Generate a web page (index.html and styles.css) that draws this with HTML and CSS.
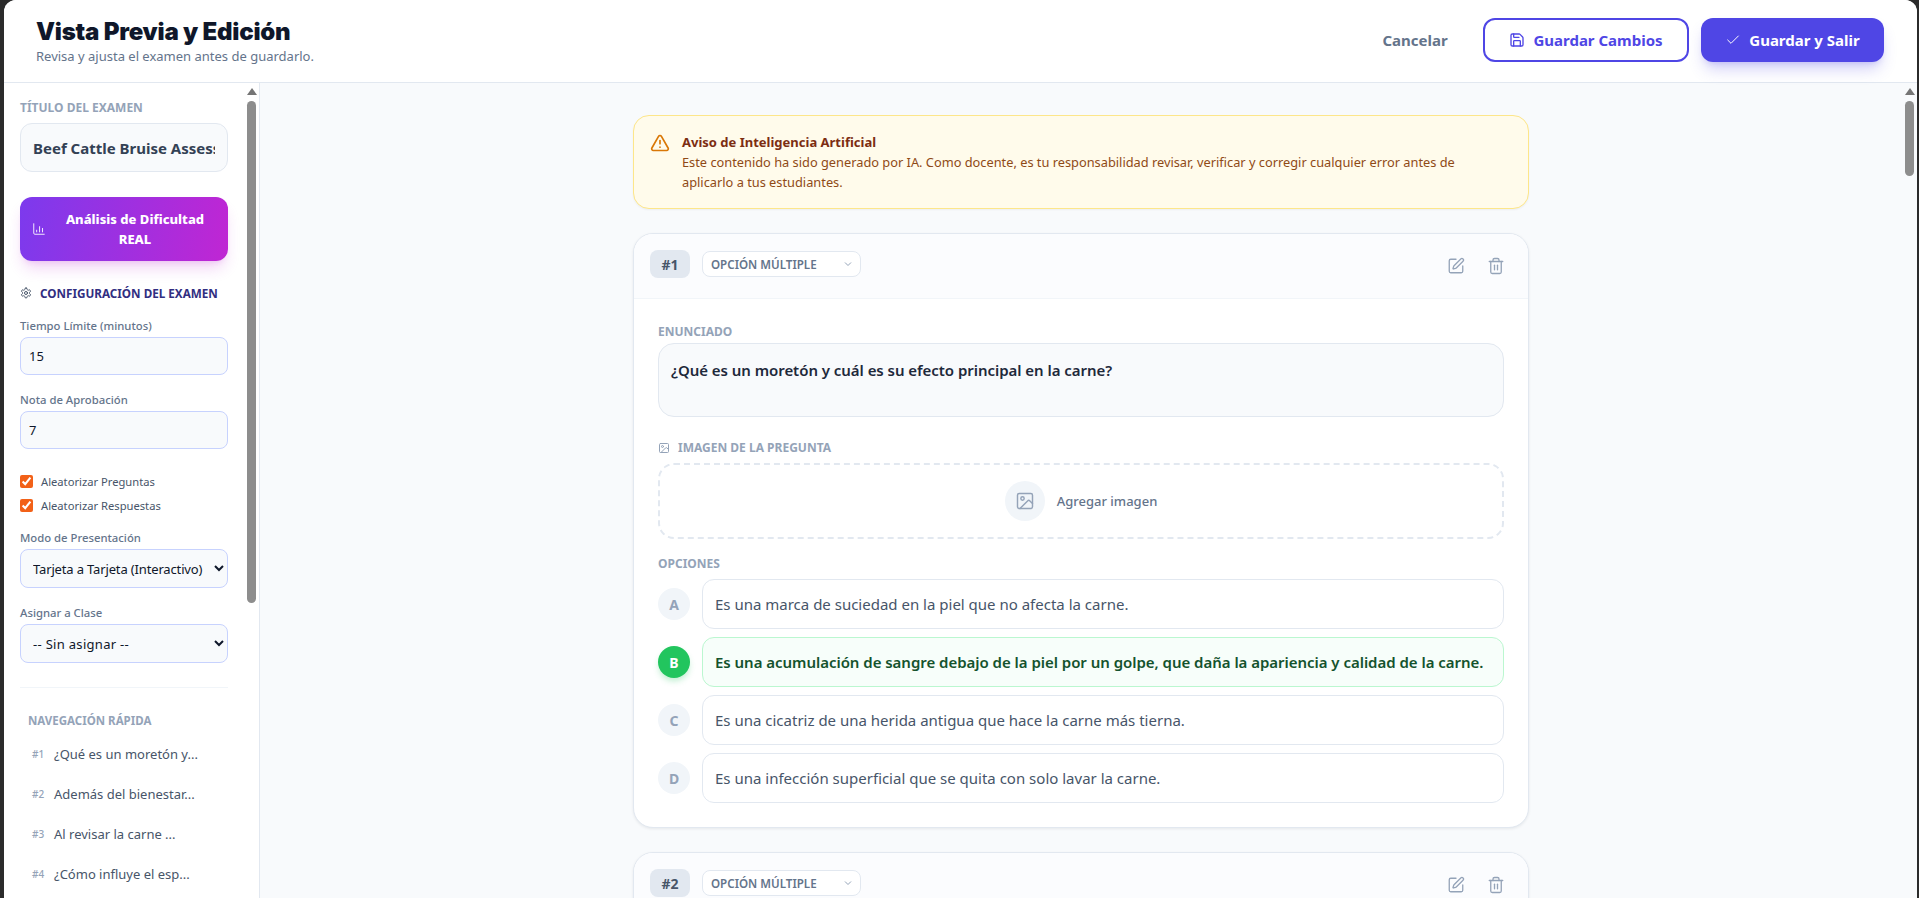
FILE: index.html
```html
<!DOCTYPE html>
<html lang="es">
<head>
<meta charset="utf-8">
<title>Vista Previa y Edición</title>
<link rel="stylesheet" href="styles.css">
</head>
<body>
<div class="app">
  <header class="topbar">
    <div class="topbar-titles">
      <h1>Vista Previa y Edición</h1>
      <p>Revisa y ajusta el examen antes de guardarlo.</p>
    </div>
    <div class="topbar-actions">
      <button class="btn btn-cancel">Cancelar</button>
      <button class="btn btn-outline">
        <svg class="ico16" viewBox="0 0 24 24"><path d="M15.2 3a2 2 0 0 1 1.4.6l3.8 3.8a2 2 0 0 1 .6 1.4V19a2 2 0 0 1-2 2H5a2 2 0 0 1-2-2V5a2 2 0 0 1 2-2z"/><path d="M17 21v-7a1 1 0 0 0-1-1H8a1 1 0 0 0-1 1v7"/><path d="M7 3v4a1 1 0 0 0 1 1h7"/></svg>
        Guardar Cambios
      </button>
      <button class="btn btn-primary">
        <svg class="ico16 ico-check" viewBox="0 0 24 24"><path d="M20 6 9 17l-5-5"/></svg>
        Guardar y Salir
      </button>
    </div>
  </header>
  <div class="workspace">
    <aside class="sidebar">
      <div class="side-scroll">
        <label class="cap cap-side">Título del Examen</label>
        <input class="title-input" type="text" value="Beef Cattle Bruise Assessment">
        <button class="analysis">
          <svg class="ico-an" viewBox="0 0 24 24"><path d="M3 3v16a2 2 0 0 0 2 2h16"/><path d="M8 17v-3"/><path d="M13 17V8"/><path d="M18 17v-6"/></svg>
          <span>Análisis de Dificultad REAL</span>
        </button>
        <div class="config-head">
          <svg class="ico-gear" viewBox="0 0 24 24"><path d="M12.200 2h-.4a2 2 0 0 0-2 2v.2a2 2 0 0 1-1 1.700l-.4.300a2 2 0 0 1-2 0l-.2-.1a2 2 0 0 0-2.700.700l-.2.400a2 2 0 0 0 .7 2.700l.2.100a2 2 0 0 1 1 1.700v.5a2 2 0 0 1-1 1.700l-.2.100a2 2 0 0 0-.7 2.700l.2.400a2 2 0 0 0 2.700.700l.2-.1a2 2 0 0 1 2 0l.4.300a2 2 0 0 1 1 1.700v.2a2 2 0 0 0 2 2h.4a2 2 0 0 0 2-2v-.2a2 2 0 0 1 1-1.700l.4-.300a2 2 0 0 1 2 0l.2.100a2 2 0 0 0 2.700-.700l.2-.4a2 2 0 0 0-.7-2.700l-.2-.1a2 2 0 0 1-1-1.700v-.5a2 2 0 0 1 1-1.700l.2-.1a2 2 0 0 0 .7-2.700l-.2-.4a2 2 0 0 0-2.700-.700l-.2.100a2 2 0 0 1-2 0l-.4-.300a2 2 0 0 1-1-1.700V4a2 2 0 0 0-2-2z"/><circle cx="12" cy="12" r="3"/></svg>
          Configuración del Examen
        </div>
        <div class="field field-first">
          <label>Tiempo Límite (minutos)</label>
          <input type="text" value="15">
        </div>
        <div class="field">
          <label>Nota de Aprobación</label>
          <input type="text" value="7">
        </div>
        <div class="checks">
          <label class="check"><input type="checkbox" checked>Aleatorizar Preguntas</label>
          <label class="check"><input type="checkbox" checked>Aleatorizar Respuestas</label>
        </div>
        <div class="field field-mode">
          <label>Modo de Presentación</label>
          <select class="sel-mode"><option>Tarjeta a Tarjeta (Interactivo)</option></select>
        </div>
        <div class="field">
          <label>Asignar a Clase</label>
          <select class="sel-class"><option>-- Sin asignar --</option></select>
        </div>
        <hr class="side-rule">
        <div class="nav-cap">Navegación Rápida</div>
        <nav class="quick">
          <a><b>#1</b>¿Qué es un moretón y...</a>
          <a><b>#2</b>Además del bienestar...</a>
          <a><b>#3</b>Al revisar la carne ...</a>
          <a><b>#4</b>¿Cómo influye el esp...</a>
        </nav>
      </div>
      <div class="vbar"><i class="arrow"></i><i class="thumb thumb-side"></i></div>
    </aside>
    <main class="main">
      <div class="main-scroll">
        <div class="column">
          <section class="notice">
            <svg class="ico-warn" viewBox="0 0 24 24"><path d="m21.730 18-8-14a2 2 0 0 0-3.480 0l-8 14A2 2 0 0 0 4 21h16a2 2 0 0 0 1.730-3"/><path d="M12 9v4"/><path d="M12 17h.01"/></svg>
            <div>
              <h2>Aviso de Inteligencia Artificial</h2>
              <p>Este contenido ha sido generado por IA. Como docente, es tu responsabilidad revisar, verificar y corregir cualquier error antes de aplicarlo a tus estudiantes.</p>
            </div>
          </section>

          <article class="card">
            <div class="card-head">
              <span class="num">#1</span>
              <span class="type">Opción Múltiple</span>
              <span class="tools">
                <svg class="tool" viewBox="0 0 24 24"><path d="M12 3H5a2 2 0 0 0-2 2v14a2 2 0 0 0 2 2h14a2 2 0 0 0 2-2v-7"/><path d="M18.375 2.625a1 1 0 0 1 3 3l-9.013 9.014a2 2 0 0 1-.853.505l-2.873.84a.5.5 0 0 1-.62-.62l.84-2.873a2 2 0 0 1 .506-.852z"/></svg>
                <svg class="tool" viewBox="0 0 24 24"><path d="M3 6h18"/><path d="M19 6v14a2 2 0 0 1-2 2H7a2 2 0 0 1-2-2V6"/><path d="M8 6V4a2 2 0 0 1 2-2h4a2 2 0 0 1 2 2v2"/><path d="M10 11v6"/><path d="M14 11v6"/></svg>
              </span>
            </div>
            <div class="card-body">
              <div class="cap cap-card">Enunciado</div>
              <div class="stem">¿Qué es un moretón y cuál es su efecto principal en la carne?</div>
              <div class="cap cap-card cap-img">
                <svg class="ico-img-s" viewBox="0 0 24 24"><rect x="3" y="3" width="18" height="18" rx="2"/><circle cx="9" cy="9" r="2"/><path d="m21 15-3.100-3.100a2 2 0 0 0-2.800 0L6 21"/></svg>
                Imagen de la Pregunta
              </div>
              <div class="drop">
                <span class="drop-circle">
                  <svg class="ico-img" viewBox="0 0 24 24"><rect x="3" y="3" width="18" height="18" rx="2"/><circle cx="9" cy="9" r="2"/><path d="m21 15-3.100-3.100a2 2 0 0 0-2.800 0L6 21"/></svg>
                </span>
                Agregar imagen
              </div>
              <div class="cap cap-card cap-opts">Opciones</div>
              <div class="options">
                <div class="option"><span class="letter">A</span><div class="answer">Es una marca de suciedad en la piel que no afecta la carne.</div></div>
                <div class="option right"><span class="letter">B</span><div class="answer">Es una acumulación de sangre debajo de la piel por un golpe, que daña la apariencia y calidad de la carne.</div></div>
                <div class="option"><span class="letter">C</span><div class="answer">Es una cicatriz de una herida antigua que hace la carne más tierna.</div></div>
                <div class="option"><span class="letter">D</span><div class="answer">Es una infección superficial que se quita con solo lavar la carne.</div></div>
              </div>
            </div>
          </article>

          <article class="card">
            <div class="card-head">
              <span class="num">#2</span>
              <span class="type">Opción Múltiple</span>
              <span class="tools">
                <svg class="tool" viewBox="0 0 24 24"><path d="M12 3H5a2 2 0 0 0-2 2v14a2 2 0 0 0 2 2h14a2 2 0 0 0 2-2v-7"/><path d="M18.375 2.625a1 1 0 0 1 3 3l-9.013 9.014a2 2 0 0 1-.853.505l-2.873.84a.5.5 0 0 1-.62-.62l.84-2.873a2 2 0 0 1 .506-.852z"/></svg>
                <svg class="tool" viewBox="0 0 24 24"><path d="M3 6h18"/><path d="M19 6v14a2 2 0 0 1-2 2H7a2 2 0 0 1-2-2V6"/><path d="M8 6V4a2 2 0 0 1 2-2h4a2 2 0 0 1 2 2v2"/><path d="M10 11v6"/><path d="M14 11v6"/></svg>
              </span>
            </div>
          </article>
        </div>
      </div>
      <div class="vbar"><i class="arrow"></i><i class="thumb thumb-main"></i></div>
    </main>
  </div>
</div>
</body>
</html>
```
FILE: styles.css
```css
* { box-sizing: border-box; }
html, body { height: 100%; margin: 0; overflow: hidden; }
body {
  background: #2b2b2b;
  padding: 0 2px 0 4px;
  font-family: "Noto Sans", Inter, sans-serif;
  color: #0f172a;
}
button, input, select { font-family: inherit; }
svg { fill: none; stroke: currentColor; stroke-width: 2; stroke-linecap: round; stroke-linejoin: round; flex: none; }
.ico16 { width: 16px; height: 16px; }
.ico-check { stroke-width: 1.500; }

.app { height: 100%; display: flex; flex-direction: column; background: #f8fafc; border-radius: 12px 12px 0 0; overflow: hidden; }

.topbar { height: 83px; flex: none; display: flex; align-items: center; justify-content: space-between; padding: 0 33px 3px 32px; background: #fff; border-bottom: 1px solid #e2e8f0; }
.topbar h1 { margin: 0; font-family: Inter, "Noto Sans", sans-serif; font-size: 24px; line-height: 32px; font-weight: 900; letter-spacing: -.23px; color: #0f172a; }
.topbar p { margin: 0; font-size: 13px; line-height: 16px; color: #64748b; }
.topbar-actions { display: flex; align-items: center; gap: 12px; }
.btn { height: 44px; border-radius: 12px; font-size: 15px; font-weight: 700; display: flex; align-items: center; justify-content: center; gap: 8px; border: 0; background: none; }
.btn-cancel { width: 112px; color: #64748b; }
.btn-outline { width: 206px; border: 2px solid #4f46e5; color: #4f46e5; background: #fff; }
.btn-primary { width: 183px; background: #4f46e5; color: #fff; box-shadow: 0 10px 15px -3px rgba(79,70,229,.25), 0 4px 6px -4px rgba(79,70,229,.25); }

.workspace { flex: 1; min-height: 0; display: flex; }
.sidebar { width: 256px; flex: none; display: flex; background: #fff; border-right: 1px solid #e2e8f0; }
.side-scroll { flex: 1; min-width: 0; padding: 17px 16px 16px; overflow: hidden; }
.main { flex: 1; min-width: 0; display: flex; }
.main-scroll { flex: 1; min-width: 0; padding: 32px 0; overflow: hidden; }
.vbar { width: 15px; flex: none; padding: 5px 3px 0; display: flex; flex-direction: column; align-items: stretch; }
.arrow { align-self: center; width: 0; height: 0; border: 5px solid transparent; border-top: 0; border-bottom: 7px solid #757575; }
.thumb { display: block; margin-top: 6px; background: #8d8d8d; border-radius: 5px; }
.thumb-side { height: 502px; }
.thumb-main { height: 75px; }

.cap { display: block; font-size: 12px; line-height: 16px; font-weight: 700; text-transform: uppercase; color: #94a3b8; }
.title-input { display: block; width: 100%; height: 49px; margin-top: 7px; padding: 0 12px; border: 1px solid #e2e8f0; border-radius: 12px; background: #f8fafc; font-size: 15px; font-weight: 700; color: #334155; outline: 0; }
.analysis { width: 100%; height: 64px; margin-top: 25px; padding: 0 12px; border: 0; border-radius: 12px; display: flex; align-items: center; gap: 8px; color: #fff; font-size: 13px; line-height: 20px; font-weight: 800; background: linear-gradient(100deg, #7c3aed, #c026d3); box-shadow: 0 10px 15px -3px rgba(192,38,211,.2), 0 4px 6px -4px rgba(192,38,211,.2); }
.analysis span { flex: 1; text-align: center; }
.ico-an { width: 14px; height: 14px; stroke-width: 1.500; }
.config-head { margin-top: 24px; display: flex; align-items: center; gap: 8px; font-size: 11.700px; line-height: 16px; font-weight: 700; text-transform: uppercase; color: #312e81; }
.ico-gear { width: 12px; height: 12px; color: #475569; }
.field { margin-top: 17px; }
.field label { display: block; font-size: 11.300px; line-height: 16px; font-weight: 500; color: #64748b; }
.field input { display: block; width: 100%; height: 38px; margin-top: 3px; padding: 0 8px; border: 1px solid #c7d2fe; border-radius: 8px; background: #f8fafc; font-size: 13px; color: #0f172a; outline: 0; }
.field select { display: block; width: 100%; height: 39px; margin-top: 3px; padding: 0 8px; border: 1px solid #c7d2fe; border-radius: 8px; background: #f8fafc; font-size: 13px; color: #0f172a; outline: 0; }
.field-mode { margin-top: 18px; }
.sel-mode { letter-spacing: -.15px; }
.sel-class { letter-spacing: .3px; }
.checks { margin-top: 26px; display: flex; flex-direction: column; gap: 11px; }
.check { display: flex; align-items: center; gap: 8px; font-size: 11.200px; line-height: 13px; color: #475569; }
.check input { width: 13px; height: 13px; margin: 0; accent-color: #f26118; }
.side-rule { margin: 24px 0 0; border: 0; border-top: 1px solid #f1f5f9; }
.nav-cap { margin-top: 25px; padding-left: 8px; font-size: 11.500px; line-height: 16px; font-weight: 700; text-transform: uppercase; color: #94a3b8; }
.quick { margin-top: 5px; display: flex; flex-direction: column; }
.quick a { height: 40px; display: flex; align-items: center; padding-left: 12px; font-size: 13px; color: #475569; white-space: nowrap; }
.quick b { width: 10px; margin-right: 12px; font-size: 10px; font-weight: 500; color: #94a3b8; }

.column { width: 896px; margin: 0 auto; display: flex; flex-direction: column; gap: 24px; }
.notice { display: flex; gap: 12px; padding: 16px 60px 16px 16px; min-height: 94px; background: #fffbeb; border: 1px solid #fde68a; border-radius: 16px; box-shadow: 0 1px 2px rgba(0,0,0,.05); }
.ico-warn { width: 20px; height: 20px; color: #d97706; margin-top: 1px; }
.notice h2 { margin: 0; font-size: 13px; line-height: 20px; font-weight: 700; color: #7c2d12; }
.notice p { margin: 0; font-size: 12.800px; line-height: 20px; color: #8f4a16; }

.card { background: #fff; border: 1px solid #e2e8f0; border-radius: 20px; box-shadow: 0 1px 3px rgba(15,23,42,.08); overflow: hidden; }
.card-head { height: 65px; display: flex; align-items: center; padding: 0 23px 0 16px; gap: 12px; background: #fbfcfe; border-bottom: 1px solid #f1f5f9; }
.num { width: 40px; height: 28px; margin-bottom: 4px; display: flex; align-items: center; justify-content: center; background: #e2e8f0; border-radius: 8px; font-size: 14px; font-weight: 700; color: #475569; }
.type { width: 159px; height: 26px; margin-bottom: 4px; padding: 0 8px; display: flex; align-items: center; background: #fff url("data:image/svg+xml,%3Csvg xmlns='http://www.w3.org/2000/svg' width='8' height='8' fill='none' stroke='%2394a3b8' stroke-width='1'%3E%3Cpath d='M1 2.500l3 3 3-3'/%3E%3C/svg%3E") no-repeat right 8px center; border: 1px solid #e2e8f0; border-radius: 8px; font-size: 11.600px; font-weight: 600; text-transform: uppercase; color: #64748b; }
.tools { margin-left: auto; display: flex; gap: 22px; }
.tool { width: 18px; height: 18px; stroke-width: 1.750; color: #94a3b8; }

.card-body { padding: 25px 24px 24px; }
.stem { height: 74px; margin-top: 3px; padding: 14px 12px; background: #f8fafc; border: 1px solid #e2e8f0; border-radius: 16px; font-size: 15px; line-height: 24px; font-weight: 600; letter-spacing: -.04px; color: #1e293b; }
.cap-img { margin-top: 23px; display: flex; align-items: center; gap: 8px; }
.ico-img-s { width: 12px; height: 12px; }
.drop { height: 76px; margin-top: 7px; display: flex; align-items: center; justify-content: center; gap: 12px; border: 2px dashed #e2e8f0; border-radius: 16px; font-size: 13px; font-weight: 500; color: #64748b; }
.drop-circle { width: 40px; height: 40px; border-radius: 50%; background: #f1f5f9; display: flex; align-items: center; justify-content: center; }
.ico-img { width: 20px; height: 20px; color: #94a3b8; stroke-width: 1.750; }
.cap-opts { margin-top: 17px; }
.options { margin-top: 7px; display: flex; flex-direction: column; gap: 8px; }
.option { display: flex; align-items: center; gap: 12px; }
.letter { width: 32px; height: 32px; flex: none; border-radius: 50%; background: #f1f5f9; display: flex; align-items: center; justify-content: center; font-size: 14px; font-weight: 700; color: #94a3b8; }
.answer { flex: 1; height: 50px; display: flex; align-items: center; padding: 0 12px; border: 1px solid #e2e8f0; border-radius: 12px; background: #fff; font-size: 15px; color: #475569; }
.right .letter { background: #22c55e; color: #fff; box-shadow: 0 4px 6px -1px rgba(34,197,94,.3); }
.right .answer { background: #f7fefa; border-color: #bbf7d0; font-weight: 600; letter-spacing: -.03px; color: #14532d; }
```
